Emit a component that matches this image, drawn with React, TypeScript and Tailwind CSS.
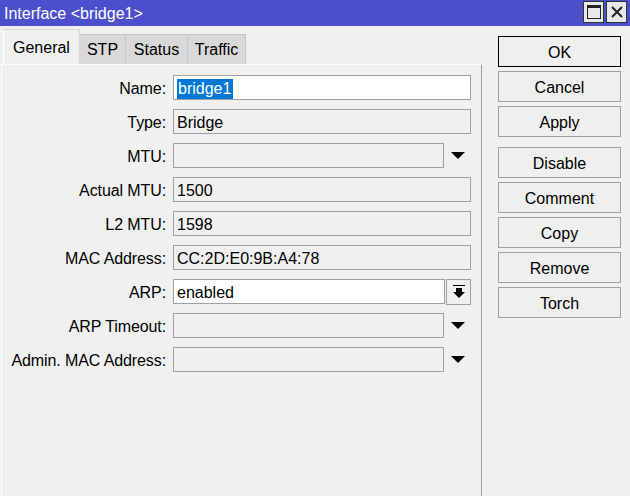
import React from 'react';

type Field = {
  label: string;
  value?: string;
  kind: 'edit' | 'readonly' | 'drop' | 'combo';
  selected?: boolean;
};

const fields: Field[] = [
  { label: 'Name:', value: 'bridge1', kind: 'edit', selected: true },
  { label: 'Type:', value: 'Bridge', kind: 'readonly' },
  { label: 'MTU:', kind: 'drop' },
  { label: 'Actual MTU:', value: '1500', kind: 'readonly' },
  { label: 'L2 MTU:', value: '1598', kind: 'readonly' },
  { label: 'MAC Address:', value: 'CC:2D:E0:9B:A4:78', kind: 'readonly' },
  { label: 'ARP:', value: 'enabled', kind: 'combo' },
  { label: 'ARP Timeout:', kind: 'drop' },
  { label: 'Admin. MAC Address:', kind: 'drop' },
];

const DownTriangle = () => (
  <svg width="14" height="7" viewBox="0 0 14 7">
    <path d="M0 0 H14 L7 7 Z" fill="#000" />
  </svg>
);

const ComboIcon = () => (
  <svg width="12" height="13" viewBox="0 0 12 13">
    <rect x="0" y="0" width="12" height="1" fill="#000" />
    <rect x="3" y="3" width="6" height="4" fill="#000" />
    <path d="M0 7 H12 L6 13 Z" fill="#000" />
  </svg>
);

const FieldRow = ({ field }: { field: Field }) => {
  const box = 'h-[25px] border border-[#a0a0a0] flex items-center px-[3px] pt-[2px]';
  return (
    <div className="flex items-center h-[25px]">
      <div className="w-[165px] text-right pr-[1px] pt-[2px] tracking-[-0.1px]">{field.label}</div>
      <div className="ml-[6px] flex items-center">
        {field.kind === 'edit' && (
          <div className={`${box} w-[298px] bg-white`}>
            <span className="bg-[#0078d7] text-white pl-[1px] pr-[2px] leading-[20px]">{field.value}</span>
          </div>
        )}
        {field.kind === 'readonly' && (
          <div className={`${box} w-[298px]`}>{field.value}</div>
        )}
        {field.kind === 'drop' && (
          <>
            <div className={`${box} w-[271px]`}>{field.value}</div>
            <div className="w-[27px] flex justify-center">
              <DownTriangle />
            </div>
          </>
        )}
        {field.kind === 'combo' && (
          <>
            <div className={`${box} w-[272px] bg-white`}>{field.value}</div>
            <div className="ml-[1px] w-[25px] h-[26px] border border-[#a0a0a0] flex items-center justify-center">
              <ComboIcon />
            </div>
          </>
        )}
      </div>
    </div>
  );
};

const ActionButton = ({ label, primary = false }: { label: string; primary?: boolean }) => (
  <div
    className={`h-[31px] w-[123px] flex items-center justify-center pt-[2px] bg-[#efefef] border ${
      primary ? 'border-black' : 'border-[#a0a0a0]'
    }`}
  >
    {label}
  </div>
);

export default function App() {
  const tabs = [
    { label: 'STP', w: 'w-[46px]' },
    { label: 'Status', w: 'w-[62px]' },
    { label: 'Traffic', w: 'w-[58px]' },
  ];

  return (
    <div
      className="w-[630px] h-[496px] bg-[#f0f0f0] flex flex-col text-[16px] text-black overflow-hidden"
      style={{ fontFamily: '"Liberation Sans", Arial, sans-serif' }}
    >
      {/* Title bar */}
      <div className="h-[26px] bg-[#4b4fcc] flex items-center justify-between pl-[4px] pr-[3px]">
        <span className="text-white pt-[1px]">Interface &lt;bridge1&gt;</span>
        <div className="flex gap-[2px] self-start pt-[1px]">
          <div className="w-[21px] h-[22px] bg-[#e8e8e8] border border-[#333] flex items-center justify-center">
            <svg width="14" height="14" viewBox="0 0 14 14">
              <rect x="0.5" y="0.5" width="13" height="13" fill="none" stroke="#222" />
              <rect x="0" y="0" width="14" height="3" fill="#222" />
            </svg>
          </div>
          <div className="w-[21px] h-[22px] bg-[#e8e8e8] border border-[#333] flex items-center justify-center">
            <svg width="12" height="12" viewBox="0 0 12 12">
              <path d="M1 1 L11 11 M11 1 L1 11" stroke="#222" strokeWidth="2" />
            </svg>
          </div>
        </div>
      </div>

      <div className="flex flex-1">
        {/* Tabs + panel */}
        <div className="w-[482px] flex flex-col">
          <div className="flex items-end pt-[3px] pl-[3px] h-[38px]">
            <div className="h-[35px] w-[77px] px-[9px] pt-[6px] bg-[#f0f0f0] border-t border-l border-r border-[#d8d8d8] border-l-white">
              General
            </div>
            {tabs.map((t) => (
              <div
                key={t.label}
                className={`h-[30px] ${t.w} flex items-center justify-center bg-[#d9d9d9] border-t border-r border-[#c6c6c6]`}
              >
                {t.label}
              </div>
            ))}
          </div>
          <div className="ml-[1px] flex-1 border-t border-t-[#fbfbfb] border-l border-l-white border-r border-r-[#a0a0a0] pt-[10px] flex flex-col gap-[9px]">
            {fields.map((f) => (
              <FieldRow key={f.label} field={f} />
            ))}
          </div>
        </div>

        {/* Buttons */}
        <div className="ml-[16px] pt-[10px] flex flex-col gap-[4px]">
          <ActionButton label="OK" primary />
          <ActionButton label="Cancel" />
          <ActionButton label="Apply" />
          <div className="mt-[6px] flex flex-col gap-[4px]">
            <ActionButton label="Disable" />
            <ActionButton label="Comment" />
            <ActionButton label="Copy" />
            <ActionButton label="Remove" />
            <ActionButton label="Torch" />
          </div>
        </div>
      </div>
    </div>
  );
}
